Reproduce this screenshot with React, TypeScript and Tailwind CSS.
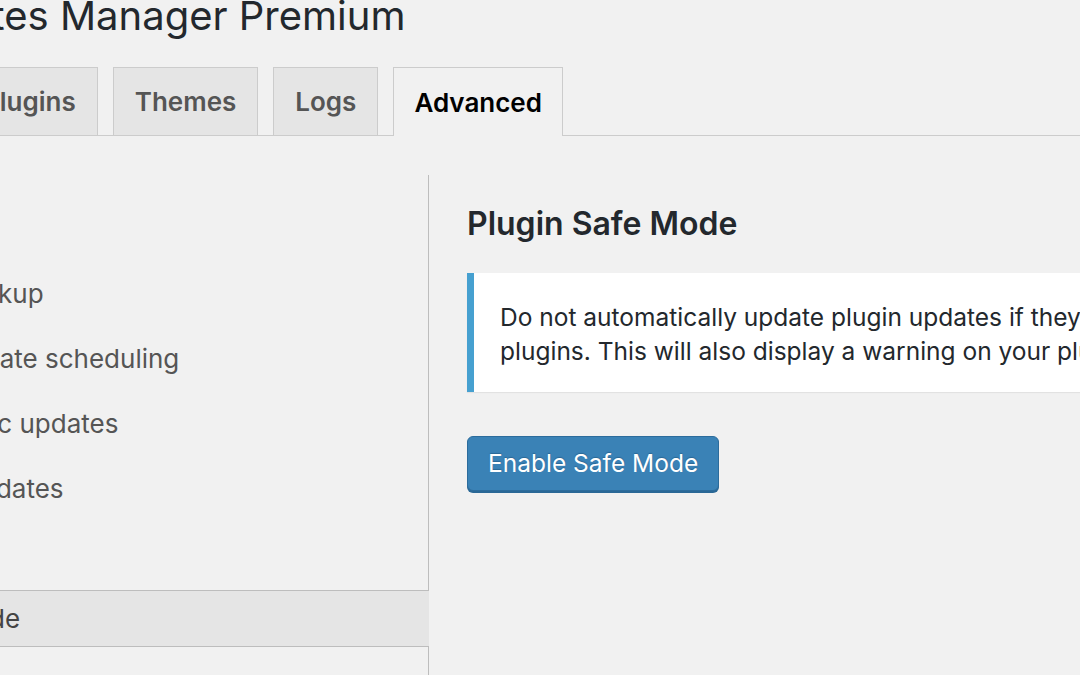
import React from "react";

const tabs = [
  { label: "Plugins", active: false },
  { label: "Themes", active: false },
  { label: "Logs", active: false },
  { label: "Advanced", active: true },
];

const menu = [
  { label: "General", active: false },
  { label: "Auto backup", active: false },
  { label: "Auto update scheduling", active: false },
  { label: "Automatic updates", active: false },
  { label: "Force updates", active: false },
  { label: "Logs", active: false },
  { label: "Safe mode", active: true },
  { label: "Anonymize updates", active: false },
];

export default function App() {
  return (
    <div className="w-[1080px] h-[675px] overflow-hidden bg-[#f1f1f1] font-['Inter','Noto_Sans',sans-serif] text-[#23282d]">
      {/* Page title */}
      <h1 className="ml-[-211px] mt-[-4px] text-[40px] leading-[40px] font-normal whitespace-nowrap">
        Easy Updates Manager Premium
      </h1>

      {/* Tabs */}
      <div className="mt-[31px] border-b border-[#cccccc]">
        <div className="ml-[-39px] flex items-end gap-[15px]">
          {tabs.map((tab) =>
            tab.active ? (
              <div
                key={tab.label}
                className="relative -mb-px h-[69px] px-[20px] flex items-center bg-[#f1f1f1] border border-b-0 border-[#cccccc] text-[26px] font-semibold text-black"
              >
                {tab.label}
              </div>
            ) : (
              <div
                key={tab.label}
                className="h-[68px] px-[21px] flex items-center bg-[#e5e5e5] border border-b-0 border-[#cccccc] text-[26px] font-semibold text-[#555555]"
              >
                {tab.label}
              </div>
            ),
          )}
        </div>
      </div>

      {/* Content */}
      <div className="mt-[39px] flex">
        {/* Sidebar */}
        <div className="w-[429px] shrink-0 border-r border-[#bdbdbd] pt-[25px] pb-[40px]">
          {menu.map((item) =>
            item.active ? (
              <div
                key={item.label}
                className="relative -mr-px mb-[9px] h-[57px] flex items-center bg-[#e5e5e5] border-y border-[#bdbdbd] overflow-hidden"
              >
                <span className="ml-[-112px] text-[26px] text-[#444444] whitespace-nowrap">
                  {item.label}
                </span>
              </div>
            ) : (
              <div
                key={item.label}
                className="mb-[9px] h-[56px] flex items-center overflow-hidden"
              >
                <span className="ml-[-112px] text-[26px] text-[#555555] whitespace-nowrap">
                  {item.label}
                </span>
              </div>
            ),
          )}
        </div>

        {/* Panel */}
        <div className="flex-1 pl-[38px]">
          <h2 className="mt-[30px] text-[32px] leading-[38px] font-semibold text-[#23282d]">
            Plugin Safe Mode
          </h2>

          <div className="mt-[30px] w-[900px] bg-white border-l-[7px] border-[#46a0d0] shadow-[0_1px_1px_rgba(0,0,0,0.06)] pl-[26px] pr-[20px] pt-[27px] pb-[24px]">
            <p className="text-[24.5px] leading-[34px] text-[#23282d] whitespace-nowrap">
              Do not automatically update plugin updates if they are not tested with your version of WordPress or are abandoned
              <br />
              plugins. This will also display a warning on your plugins screen.
            </p>
          </div>

          <button className="mt-[44px] h-[55px] px-[20px] rounded-[6px] bg-[#3a82b6] border border-[#2c6c9c] shadow-[0_2px_0_#2a6896] text-white text-[24.5px] leading-none [text-shadow:0_-1px_1px_#2a6896]">
            Enable Safe Mode
          </button>
        </div>
      </div>
    </div>
  );
}
